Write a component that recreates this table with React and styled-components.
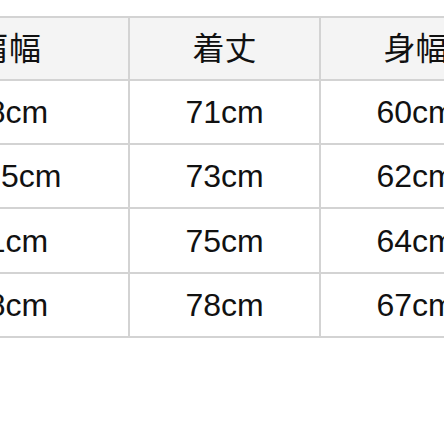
import React from 'react'
import styled, { createGlobalStyle } from 'styled-components'

const Global = createGlobalStyle`
  html, body {
    margin: 0;
    padding: 0;
    background: #fff;
  }
  body {
    font-family: "Liberation Sans", "Noto Sans CJK JP", sans-serif;
  }
`

const Page = styled.div`
  width: 444px;
  height: 444px;
  overflow: hidden;
  background: #fff;
  padding-top: 16px;
  box-sizing: border-box;
`

const Sheet = styled.div`
  display: grid;
  grid-template-columns: 238px 189px 189px;
  grid-template-rows: 61px 62px 62px 63px 62px;
  gap: 2px;
  padding: 2px;
  width: max-content;
  margin-left: -112px;
  background: #d3d3d3;
`

const Cell = styled.div`
  display: flex;
  align-items: center;
  justify-content: center;
  background: ${(p) => (p.head ? '#f4f4f4' : '#ffffff')};
  color: #111;
  font-size: 32px;
  line-height: 1;
  white-space: nowrap;
`

const head = ['肩幅', '着丈', '身幅']
const rows = [
  ['38cm', '71cm', '60cm'],
  ['45.5cm', '73cm', '62cm'],
  ['41cm', '75cm', '64cm'],
  ['48cm', '78cm', '67cm'],
]

export default function App() {
  return (
    <Page>
      <Global />
      <Sheet>
        {head.map((h) => (
          <Cell head key={h}>{h}</Cell>
        ))}
        {rows.map((r, i) =>
          r.map((v, j) => <Cell key={i + '-' + j}>{v}</Cell>)
        )}
      </Sheet>
    </Page>
  )
}
